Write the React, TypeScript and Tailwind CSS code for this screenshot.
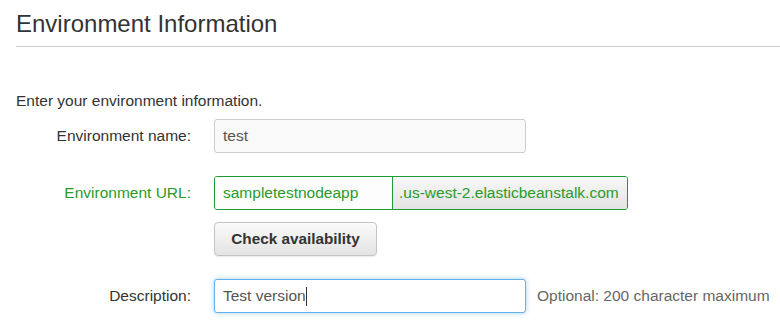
import React from "react";

export default function App() {
  return (
    <div className="w-[780px] h-[321px] bg-white overflow-hidden pl-4 text-[#333]" style={{ fontFamily: '"Liberation Sans", Arial, sans-serif' }}>
      <h1 className="text-[24px] leading-[28px] pt-[10px] pb-[8px] border-b border-[#cccccc] text-[#333]">Environment Information</h1>
      <p className="text-[15.5px] leading-[18px] mt-[45px] text-[#333]">Enter your environment information.</p>

      <div className="mt-[9px] flex items-center">
        <label className="w-[175px] text-right text-[15.5px] text-[#333]">Environment name:</label>
        <div className="ml-[23px] w-[312px] h-[34px] border border-[#cccccc] rounded-[3px] bg-[#f9f9f9] flex items-center px-[8px] text-[15.5px] text-[#555]">test</div>
      </div>

      <div className="mt-[23px] flex items-center">
        <label className="w-[175px] text-right text-[15.5px] text-[#2a9a2a]">Environment URL:</label>
        <div className="ml-[23px] h-[34px] flex border border-[#1f9a3b] rounded-[3px] overflow-hidden text-[15.5px] text-[#2a9a2a]">
          <div className="w-[178px] bg-[#fdfdfd] flex items-center px-[8px] border-r border-[#1f9a3b]">sampletestnodeapp</div>
          <div className="w-[234px] bg-gradient-to-b from-[#f8f8f8] to-[#e3e3e3] flex items-center px-[6px]">.us-west-2.elasticbeanstalk.com</div>
        </div>
      </div>

      <div className="mt-[12px] flex">
        <button className="ml-[198px] w-[163px] h-[34px] border border-[#c4c4c4] rounded-[4px] bg-gradient-to-b from-[#fafafa] to-[#e4e4e4] text-[15.3px] font-bold text-[#333] shadow-[0_1px_1px_rgba(0,0,0,0.08)]">Check availability</button>
      </div>

      <div className="mt-[23px] flex items-center">
        <label className="w-[175px] text-right text-[15.5px] text-[#333]">Description:</label>
        <div className="ml-[23px] w-[312px] h-[34px] border border-[#66afe9] rounded-[3px] bg-white flex items-center px-[8px] text-[15.5px] text-[#555] shadow-[0_0_5px_rgba(102,175,233,0.6)]">
          Test version<span className="inline-block w-px h-[19px] bg-[#333]" />
        </div>
        <span className="ml-[11px] text-[15.5px] text-[#666]">Optional: 200 character maximum</span>
      </div>
    </div>
  );
}
